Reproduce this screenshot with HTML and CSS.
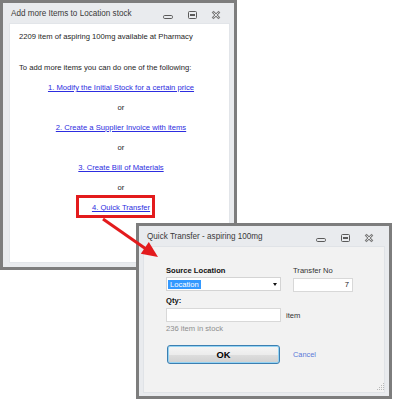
FILE: index.html
```html
<!DOCTYPE html>
<html>
<head>
<meta charset="utf-8">
<link rel="stylesheet" href="styles.css">
</head>
<body>
<div class="desk">
  <section class="win win-main">
    <header class="titlebar">
      <span class="title">Add more Items to Location stock</span>
      <span class="ctrls">
        <svg class="ctl" viewBox="0 0 16 12" width="16" height="12"><rect x="3.5" y="6.5" width="9" height="3" rx="1.2" fill="none" stroke="#5a5a5a"/></svg>
        <svg class="ctl" viewBox="0 0 16 12" width="16" height="12"><rect x="4.5" y="2.5" width="8" height="7" rx="1" fill="none" stroke="#5a5a5a"/><rect x="6" y="5" width="5" height="2" fill="#5a5a5a"/></svg>
        <svg class="ctl" viewBox="0 0 16 12" width="16" height="12"><path d="M5.5 3.5 L10.5 8.5 M10.5 3.5 L5.5 8.5" stroke="#7c7c7c" stroke-width="2.6" stroke-linecap="square"/><path d="M5.5 3.5 L10.5 8.5 M10.5 3.5 L5.5 8.5" stroke="#eceef1" stroke-width="0.9"/></svg>
      </span>
    </header>
    <div class="pane pane-main">
      <p class="info">2209 item of aspiring 100mg available at Pharmacy</p>
      <p class="info info-gap">To add more items you can do one of the following:</p>
      <ul class="opts">
        <li><a href="#">1. Modify the Initial Stock for a certain price</a></li>
        <li>or</li>
        <li><a href="#">2. Create a Supplier Invoice with items</a></li>
        <li>or</li>
        <li><a href="#">3. Create Bill of Materials</a></li>
        <li>or</li>
        <li><a href="#">4. Quick Transfer</a></li>
      </ul>
    </div>
  </section>

  <div class="callout"></div>

  <section class="win win-qt">
    <header class="titlebar titlebar-qt">
      <span class="title">Quick Transfer - aspiring 100mg</span>
      <span class="ctrls ctrls-qt">
        <svg class="ctl" viewBox="0 0 16 12" width="16" height="12"><rect x="3.5" y="6.5" width="9" height="3" rx="1.2" fill="none" stroke="#5a5a5a"/></svg>
        <svg class="ctl" viewBox="0 0 16 12" width="16" height="12"><rect x="4.5" y="2.5" width="8" height="7" rx="1" fill="none" stroke="#5a5a5a"/><rect x="6" y="5" width="5" height="2" fill="#5a5a5a"/></svg>
        <svg class="ctl" viewBox="0 0 16 12" width="16" height="12"><path d="M5.5 3.5 L10.5 8.5 M10.5 3.5 L5.5 8.5" stroke="#7c7c7c" stroke-width="2.6" stroke-linecap="square"/><path d="M5.5 3.5 L10.5 8.5 M10.5 3.5 L5.5 8.5" stroke="#eceef1" stroke-width="0.9"/></svg>
      </span>
    </header>
    <div class="pane pane-qt">
      <div class="row-top">
        <div class="col-src">
          <div class="lbl lbl-bold">Source Location</div>
          <div class="select"><span class="sel-text">Location</span><span class="caret"></span></div>
        </div>
        <div class="col-no">
          <div class="lbl">Transfer No</div>
          <div class="input input-no">7</div>
        </div>
      </div>
      <div class="lbl lbl-bold lbl-qty">Qty:</div>
      <div class="row-qty">
        <div class="input input-qty"></div>
        <span class="unit">item</span>
      </div>
      <div class="stock">236 item in stock</div>
      <div class="actions">
        <button class="btn-ok">OK</button>
        <a class="cancel" href="#">Cancel</a>
      </div>
    </div>
    <svg class="grip" viewBox="0 0 8 8" width="8" height="8">
      <rect x="6" y="0" width="1" height="1" fill="#b8b8b8"/>
      <rect x="4" y="2" width="1" height="1" fill="#b8b8b8"/>
      <rect x="6" y="2" width="1" height="1" fill="#b8b8b8"/>
      <rect x="2" y="4" width="1" height="1" fill="#b8b8b8"/>
      <rect x="4" y="4" width="1" height="1" fill="#b8b8b8"/>
      <rect x="6" y="4" width="1" height="1" fill="#b8b8b8"/>
      <rect x="0" y="6" width="1" height="1" fill="#b8b8b8"/>
      <rect x="2" y="6" width="1" height="1" fill="#b8b8b8"/>
      <rect x="4" y="6" width="1" height="1" fill="#b8b8b8"/>
      <rect x="6" y="6" width="1" height="1" fill="#b8b8b8"/>
    </svg>
  </section>

  <svg class="arrow" viewBox="0 0 393 400" width="393" height="400">
    <line x1="103" y1="219" x2="146" y2="249" stroke="#e31b1d" stroke-width="3"/>
    <polygon points="158,257 140.8,253.7 148.8,242.1" fill="#e31b1d"/>
  </svg>
</div>
</body>
</html>
```

FILE: styles.css
```css
* {
  box-sizing: border-box;
  margin: 0;
  padding: 0;
}

body {
  margin: 0;
  background: #ffffff;
  font-family: "Liberation Sans", Arial, sans-serif;
}

.desk {
  position: relative;
  width: 393px;
  height: 400px;
  overflow: hidden;
  background: #ffffff;
}

.win {
  position: absolute;
  display: flex;
  flex-direction: column;
  border: 3px solid #7d7d7d;
  background: #e9ebee;
}

.win-main {
  left: 0;
  top: 0;
  width: 237px;
  height: 270px;
  padding: 0 4px 4px 6px;
}

.win-qt {
  left: 136px;
  top: 223px;
  width: 256px;
  height: 176px;
  padding: 0 4px 3px 4px;
}

.titlebar {
  height: 20px;
  flex: none;
  display: flex;
  align-items: center;
  justify-content: space-between;
  padding-left: 2px;
}

.titlebar-qt {
  padding-left: 4px;
}

.title {
  font-size: 8.15px;
  color: #3a3a3a;
  white-space: nowrap;
  padding-top: 1px;
}

.ctrls {
  display: flex;
  gap: 8px;
  padding-right: 6px;
  padding-top: 3px;
}

.ctrls-qt {
  padding-right: 8px;
}

.ctl {
  display: block;
}

.pane {
  flex: 1;
}

.pane-main {
  background: #ffffff;
  box-shadow: inset 0 0 0 1px #e2e5e9;
  padding-top: 4px;
  color: #1e1e1e;
}

.info {
  font-size: 7.65px;
  line-height: 20px;
  padding-left: 10px;
  white-space: nowrap;
}

.info-gap {
  margin-top: 11px;
}

.opts {
  list-style: none;
  text-align: center;
  font-size: 7.65px;
  line-height: 20px;
  padding-left: 3px;
}

.opts a {
  color: #2d2de0;
  text-decoration: underline;
}

.callout {
  position: absolute;
  left: 76px;
  top: 195px;
  width: 79px;
  height: 23px;
  border: 3px solid #e31b1d;
}

.pane-qt {
  background: #f2f2f2;
  box-shadow: inset 0 0 0 1px #e0e3e7;
  padding: 20px 0 0 23px;
  color: #1a1a1a;
}

.row-top {
  display: flex;
}

.col-src {
  width: 115px;
}

.col-no {
  width: 60px;
  margin-left: 12px;
}

.lbl {
  font-size: 7.6px;
  line-height: 10px;
  white-space: nowrap;
  color: #333333;
}

.lbl-bold {
  font-weight: bold;
  color: #111111;
}

.select {
  margin-top: 1px;
  height: 14px;
  background: #ffffff;
  border: 1px solid #d4d4d4;
  display: flex;
  align-items: center;
  padding-left: 1px;
}

.sel-text {
  background: #3399ff;
  color: #ffffff;
  font-size: 7.6px;
  line-height: 9px;
  padding: 0 2px;
}

.caret {
  margin-left: auto;
  margin-right: 3px;
  width: 0;
  height: 0;
  border-left: 2.5px solid transparent;
  border-right: 2.5px solid transparent;
  border-top: 3px solid #111111;
}

.input {
  height: 14px;
  background: #ffffff;
  border: 1px solid #d8d8d8;
  font-size: 7.6px;
  line-height: 12px;
}

.input-no {
  margin-top: 2px;
  text-align: right;
  padding-right: 3px;
}

.lbl-qty {
  margin-top: 4px;
}

.row-qty {
  display: flex;
  align-items: center;
  margin-top: 2px;
}

.input-qty {
  width: 115px;
}

.unit {
  margin-left: 5px;
  font-size: 7.6px;
  color: #333333;
}

.stock {
  margin-top: 2px;
  font-size: 7.6px;
  line-height: 10px;
  color: #8e8e8e;
}

.actions {
  display: flex;
  align-items: center;
  margin-top: 11px;
}

.btn-ok {
  width: 113px;
  height: 19px;
  margin-left: 1px;
  border: 1px solid #3c7fb1;
  border-radius: 3px;
  box-shadow: inset 0 0 0 1px #95d3f3;
  background: linear-gradient(#f5f5f5, #ececec 50%, #dedede 51%, #d0d0d0);
  font-family: "Liberation Sans", Arial, sans-serif;
  font-weight: bold;
  font-size: 9.3px;
  color: #000000;
}

.cancel {
  margin-left: 13px;
  font-size: 7.4px;
  color: #5a78d8;
  text-decoration: none;
}

.grip {
  position: absolute;
  right: 4px;
  bottom: 5px;
}

.arrow {
  position: absolute;
  left: 0;
  top: 0;
  pointer-events: none;
}
```
